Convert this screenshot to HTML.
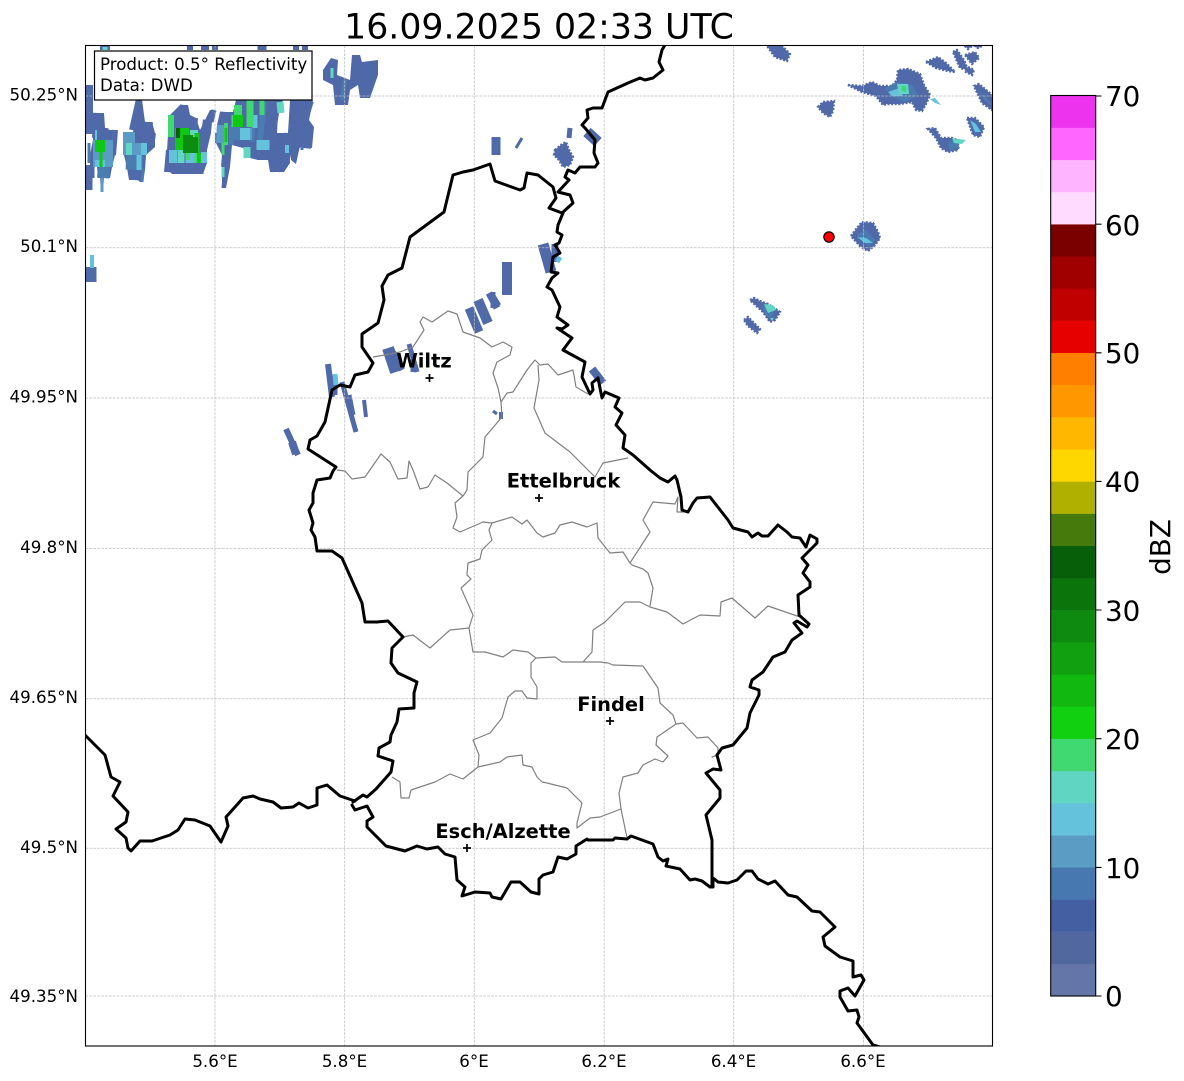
<!DOCTYPE html>
<html><head><meta charset="utf-8"><title>Reflectivity</title>
<style>html,body{margin:0;padding:0;background:#fff}svg{display:block}text{font-family:"DejaVu Sans","Liberation Sans",sans-serif;fill:#000}.tl{font-size:16.67px}.cb{font-size:27.78px}.city{font-size:19.44px;font-weight:bold;text-anchor:middle}.xl{text-anchor:middle}.yl{text-anchor:end}</style></head>
<body>
<svg width="1184" height="1081" viewBox="0 0 1184 1081" xmlns="http://www.w3.org/2000/svg">
<defs><clipPath id="ax"><rect x="85.5" y="45.5" width="907" height="1000.5"/></clipPath></defs>
<rect width="1184" height="1081" fill="#fff"/>
<text x="539" y="38.5" font-size="34.72" text-anchor="middle">16.09.2025 02:33 UTC</text>
<g clip-path="url(#ax)">
<g fill="#4f69a8">
<polygon points="93,113 104,113 105,128 110,130 117,130 115,155 112,167 110,178 104,178 103,192 101,192 100,178 98,178 97,167 90,165 90,155 93,140"/>
<polygon points="125,132 133,132 136,115 141,92 145,122 152,122 155,133 155,147 146,155 145,170 143,182 140,182 138,180 129,180 127,168 124,155 123,143"/>
<polygon points="180,105 188,105 190,115 196,118 200,130 205,120 210,110 215,110 212,122 211,133 207,150 207,163 203,174 172,174 170,172 165,172 167,150 168,135 170,115"/>
<polygon points="220,112 233,112 236,100 260,96 275,96 283,100 278,113 277,133 288,133 290,163 284,172 270,172 268,160 258,160 250,158 243,148 232,145 230,167 226,188 222,188 222,155 216,143 217,125"/>
<polygon points="290,100 313,100 309,120 314,127 312,148 300,146 296,164 291,160 288,133"/>
<polygon points="323,70 331,58 338,60 337,75 350,80 352,55 360,55 362,62 378,60 378,75 370,98 360,98 358,85 350,90 348,105 335,105 333,85 323,80"/>
</g>
<g fill="none" stroke-linecap="butt">
<g stroke="#5069a8">
<path d="M89 85V134" stroke-width="8"/><path d="M90 165L90 178" stroke-width="9"/><path d="M89 178V190" stroke-width="7"/>
<path d="M98 113L97 138" stroke-width="10"/><path d="M106 128L105 140" stroke-width="5"/><path d="M115 130L113 155" stroke-width="6"/>
<path d="M141 90L132 130" stroke-width="6"/><path d="M148 122L146 145" stroke-width="10"/><path d="M153 133L151 147" stroke-width="6"/><path d="M135 168L134 180" stroke-width="9"/>
<path d="M184 105L182 117" stroke-width="8"/><path d="M182 115L181 128" stroke-width="17"/><path d="M196 118L195 130" stroke-width="4"/><path d="M207 120L205 133" stroke-width="8"/><path d="M214 110L211 122" stroke-width="5"/><path d="M204 133L202 153" stroke-width="7"/><path d="M169 150L167 172" stroke-width="6"/><path d="M188 162L188 174" stroke-width="31"/>
<path d="M226 112L225 125" stroke-width="12"/><path d="M217 133V143" stroke-width="4"/><path d="M226 155L225 167" stroke-width="8"/><path d="M224 177L223 188" stroke-width="3"/>
<path d="M275 95L267 143" stroke-width="14"/><path d="M262 150V160" stroke-width="10"/><path d="M276 152V163" stroke-width="13"/><path d="M273 163L272 172" stroke-width="4"/><path d="M279 163L278 172" stroke-width="4"/>
<path d="M307 100L300 123" stroke-width="14"/><path d="M305 127L303 148" stroke-width="16"/><path d="M288 133L285 160" stroke-width="7"/><path d="M292 120L289 145" stroke-width="5"/><path d="M290 145L288 163" stroke-width="3"/>
<path d="M190 45V50" stroke-width="6"/><path d="M205 45V50" stroke-width="8"/><path d="M215 45V50" stroke-width="6"/><path d="M262 45V50" stroke-width="9"/><path d="M296 45V50" stroke-width="6"/><path d="M305 45V50" stroke-width="6"/><path d="M105 45V50" stroke-width="10"/>
<path d="M91 267V282" stroke-width="11"/>
<path d="M496 137V155" stroke-width="9"/><path d="M522 138L516 148" stroke-width="3"/><path d="M570 128L569 138" stroke-width="5"/>
<path d="M587 132L598 142" stroke-width="11"/>
<path d="M543 244L551 272" stroke-width="11"/><path d="M555 244V262" stroke-width="7"/>
<path d="M507 262V295" stroke-width="10"/><path d="M489 293L497 308" stroke-width="7"/><path d="M493 292V308" stroke-width="5"/>
<path d="M469 308L479 332" stroke-width="9"/><path d="M478 300L488 323" stroke-width="10"/><path d="M492 296L498 306" stroke-width="7"/>
<path d="M388 348L396 372" stroke-width="12"/><path d="M393 352L402 370" stroke-width="6"/><path d="M409 344L417 372" stroke-width="5"/><path d="M413 356V372" stroke-width="5"/>
<path d="M328 364L332 397" stroke-width="6"/><path d="M335 375V395" stroke-width="5"/><path d="M342 382L356 432" stroke-width="5"/><path d="M349 395L353 415" stroke-width="5"/>
<path d="M364 400L366 417" stroke-width="4"/><path d="M493 411L497 414" stroke-width="3"/><path d="M501 412V419" stroke-width="4"/>
<path d="M592 369L603 383" stroke-width="8"/><path d="M286 429L298 455" stroke-width="6"/><path d="M292 442L296 454" stroke-width="8"/>
</g>
<g stroke="#4a7cb2">
<path d="M89 143V163" stroke-width="3"/><path d="M104 167L103 178" stroke-width="12"/>
<path d="M264 102L260 140" stroke-width="6"/><path d="M253 125L252 142" stroke-width="5"/>
<path d="M135 155L134 170" stroke-width="17"/><path d="M143 168L142 182" stroke-width="3"/>
<path d="M232 125L231 145" stroke-width="5"/><path d="M238 127L236 140" stroke-width="8"/>
<path d="M302 148V150" stroke-width="3"/><path d="M345 80L342 100" stroke-width="4"/>
</g>
<g stroke="#5a9cc6">
<path d="M103 140L103 167" stroke-width="20"/><path d="M129 132V145" stroke-width="12"/><path d="M134 143V155" stroke-width="22"/>
<path d="M222 125L221 143" stroke-width="10"/><path d="M102 178L102 192" stroke-width="3"/>
<path d="M248 128V140" stroke-width="8"/>
</g>
<g stroke="#64c2dc">
<path d="M96 130V140" stroke-width="2"/><path d="M144 143V155" stroke-width="6"/><path d="M139 155V170" stroke-width="5"/><path d="M245 128V140" stroke-width="10"/><path d="M263 140L263 150" stroke-width="13"/>
<path d="M92 255V268" stroke-width="4"/><path d="M287 145V153" stroke-width="4"/><path d="M173 150V163" stroke-width="8"/><path d="M190 150V163" stroke-width="9"/><path d="M204 152V163" stroke-width="6"/>
<path d="M255 115V128" stroke-width="5"/><path d="M100 160V167" stroke-width="10"/><path d="M560 257L557 262" stroke-width="5"/>
<path d="M335 374L336 385" stroke-width="5"/>
</g>
<g stroke="#62d6c2">
<path d="M129 143V155" stroke-width="6"/><path d="M181 150V163" stroke-width="7"/><path d="M280 102L281 113" stroke-width="7"/><path d="M247 147V158" stroke-width="7"/><path d="M223 167V177" stroke-width="3"/><path d="M194 130V150" stroke-width="8"/><path d="M105 47V50" stroke-width="5"/><path d="M332 68V78" stroke-width="3"/>
</g>
<g stroke="#40d870">
<path d="M171 115L171 137" stroke-width="6"/><path d="M238 105V117" stroke-width="8"/><path d="M250 100V127" stroke-width="7"/><path d="M262 100V115" stroke-width="5"/><path d="M226 123V145" stroke-width="4"/><path d="M223 143V155" stroke-width="3"/><path d="M197 153V163" stroke-width="5"/><path d="M188 150V160" stroke-width="4"/>
<path d="M233 115V127" stroke-width="3"/>
</g>
<g stroke="#10c814">
<path d="M100 140V152" stroke-width="10"/><path d="M101 150V167" stroke-width="3"/><path d="M238 115V127" stroke-width="10"/><path d="M182 128V150" stroke-width="14"/><path d="M199 153V163" stroke-width="4"/><path d="M226 128V142" stroke-width="3"/><path d="M197 133V153" stroke-width="5"/>
</g>
<g stroke="#0c8c10"><path d="M188 135V153" stroke-width="10"/><path d="M195 137V153" stroke-width="6"/></g>
<g stroke="#086008"><path d="M178 128V138" stroke-width="4"/></g>
</g>
<g fill="#5069a8" stroke="#5069a8" stroke-width="2.4" stroke-dasharray="2 1.6">
<polygon points="767,46 782,46 790,54 787,61 775,57"/>
<polygon points="818,107 823,102 834,101 833,111 830,117 823,113"/>
<polygon points="848,85 862,86 872,82 880,86 892,86 897,80 898,70 908,69 920,74 924,85 930,95 926,104 922,111 916,110 912,102 900,104 887,104 883,105 876,96 862,92"/>
<polygon points="926,62 938,57 946,63 955,72 948,71 936,68"/>
<polygon points="953,52 957,50 964,60 968,70 960,68"/><polygon points="965,55 975,52 979,58 972,64"/><polygon points="968,67 974,70 972,75 966,72"/><polygon points="965,46 972,46 968,49"/><polygon points="975,46 982,46 978,48"/>
<polygon points="974,86 979,84 992,95 992,110 982,103"/>
<polygon points="928,129 935,128 941,138 952,138 958,140 958,150 948,152 941,148 936,138"/>
<polygon points="967,118 975,118 984,127 980,137 973,135"/>
<polygon points="851,236 857,228 862,222 873,223 878,232 880,238 875,245 868,251 860,246"/>
<polygon points="750,300 754,298 762,302 768,304 780,312 775,320 770,322 763,312"/>
<polygon points="744,320 748,317 760,329 757,333 748,326"/>
<polygon points="555,150 561,145 566,142 569,150 573,157 570,165 563,167 559,160 554,155"/>
</g>
<g fill="#4a7cb2"><polygon points="885,88 898,82 912,85 918,95 905,102 892,97"/><polygon points="980,92 988,99 992,106 984,100"/><polygon points="948,142 955,140 960,148 950,150"/><polygon points="857,234 866,230 875,240 868,246"/><polygon points="762,306 775,308 772,318 766,316"/></g>
<g fill="#64c2dc"><polygon points="970,120 976,124 981,132 975,132"/><polygon points="888,92 900,88 903,96 892,96"/><polygon points="857,237 866,238 873,243 865,243"/><polygon points="930,99 935,98 941,105 935,103"/></g>
<g fill="#62d6c2"><polygon points="952,138 958,139 966,140 962,144 954,143"/><polygon points="897,84 908,84 909,94 899,94"/><polygon points="764,304 773,305 776,310 768,313"/><polygon points="770,318 774,318 772,321"/></g>
<polygon points="901,86 906,86 906,92 902,91" fill="#40d870"/>
<rect x="248" y="87" width="14" height="13" fill="#e6e9f3"/>
</g>
<g stroke="#bdbdbd" stroke-width=".75" stroke-dasharray="2.7 1.2" fill="none">
<path d="M215 45.5V1046M344.7 45.5V1046M474.3 45.5V1046M604.2 45.5V1046M733.7 45.5V1046M863.5 45.5V1046"/>
<path d="M85.5 96H992.5M85.5 247.7H992.5M85.5 398H992.5M85.5 548.5H992.5M85.5 698.7H992.5M85.5 848.3H992.5M85.5 996H992.5"/>
</g>
<g clip-path="url(#ax)">
<g fill="none" stroke="#808080" stroke-width="1.2" stroke-linejoin="round">
<path d="M373 357L385 355 400 352 413 347 424 330 420 322 423 317 432 322 448 311 457 314 463 332 480 338 492 347 503 342 512 347 510 355 497 362 493 373 498 388 501 402 507 393 513 392 527 370 535 360 540 365 548 364 558 375 573 370 576 387 588 394"/>
<path d="M501 402L502 417 485 437 483 457 468 472 467 490 463 496 455 503 457 517 453 528 460 532 483 522 492 523 512 517 522 524 527 520 537 533 543 537 555 533 560 525 572 522 587 527 597 523 598 538 610 553 623 552 630 563"/>
<path d="M538 365L539 380 534 408 545 433 570 452 595 477 603 463 628 458"/>
<path d="M337 470L345 471 352 479 365 477 381 454 390 462 398 479 407 478 409 461 413 470 420 489 428 487 435 475 447 483 463 496"/>
<path d="M492 523L489 530 492 540 482 550 480 559 468 563 467 575 471 579 461 588 473 615 469 628 473 652 485 652 503 657 513 650 528 652 536 658 555 657 562 662 583 662 592 652 593 630 605 622 625 602 640 602 650 607"/>
<path d="M403 637L413 635 430 648 450 630 469 628"/>
<path d="M536 658L531 663 531 677 537 687 537 699 527 698 522 691 515 691 508 697 502 718 490 733 473 740 479 755 478 767"/>
<path d="M392 777L400 782 401 798 409 798 411 790 435 782 450 774 463 779 478 767 500 762 507 757 522 755 523 765 532 767 537 777 542 782 547 783 567 788 582 803 577 823 577 828 590 818 600 817 621 809 626 833 627 837"/>
<path d="M621 809L619 793 623 777 638 773 643 765 655 759 663 762 668 756 656 745 657 737 676 724 683 723 697 738 708 737 718 748 718 755 712 757 717 755"/>
<path d="M583 662L600 662 608 663 613 665 643 666 658 688 660 703 673 715 676 724"/>
<path d="M650 607L667 612 683 624 700 615 720 616 721 602 732 598 755 618 768 606 800 617"/>
<path d="M650 606L653 588 648 573 643 569 632 565 630 563"/>
<path d="M630 563L650 532 643 520 653 502 675 504 678 497 677 512 687 512"/>
</g>
<g fill="none" stroke="#000" stroke-width="3" stroke-linejoin="round" stroke-linecap="round">
<path d="M85 735L105 755 111 777 120 782 113 796 128 812 126 822 116 829 126 838 128 848 131 851 140 841 152 841 170 835 178 830 185 819 195 820 210 826 221 842 228 826 226 817 235 807 243 798 253 796 260 799 273 802 281 808 293 807 299 803 308 808 317 805 317 788 327 785 340 796 355 801"/>
<path d="M353 802L363 795 367 797 376 789 391 772 393 761 378 756 379 748 390 742 391 735 397 722 399 709 414 708 414 693 417 682 398 673 391 663 392 648 403 637 388 621 377 622 365 622 362 603 342 558 332 551 317 551 315 537 311 530 313 523 309 510 313 503 313 493 317 480 330 478 333 471 336 467 308 449 310 440 317 436 325 422 332 390 340 385 350 387 355 375 368 372 373 363 362 347 362 334 378 323 384 300 382 286 388 275 402 268 410 237 444 212 453 175 463 172 473 170 490 164 495 181 520 190 524 188 527 173 538 175 553 187 556 198 549 208 562 213 573 203 570 195 558 192 569 180 565 177 568 170 575 173 580 167 595 167 598 163 594 153 595 140 585 128 582 125 588 118 587 110 593 108 602 108 608 92 628 83 640 78 645 80 653 78 663 70 659 62 662 50 665 45"/>
<path d="M563 213L558 225 557 232 562 235 559 243 555 245 560 253 553 257 551 272 558 273 552 278 547 287 552 290 560 307 557 317 568 325 562 329 557 328 572 338 563 350 585 362 582 377 590 394 593 390 592 383 598 378 602 398 605 392 619 398 615 407 622 413 616 425 625 435 623 448 633 455 650 470 660 478 668 482 675 476 677 480 681 497 682 510 688 512 693 503 697 498 710 497 728 520 733 528 748 532 752 537 758 533 762 536 768 536 778 525 787 532 792 537 800 538 806 547 810 535 817 539 817 543 802 558 808 565 803 573 810 582 810 587 798 595 799 615 809 624 807 627 797 621 794 623 802 633 792 640 785 652 773 657 763 672 752 680 750 687 759 690 759 695 750 713 747 728 733 745 722 748 717 755 721 770 713 769 706 773 720 790 720 798 706 815 712 840 712 887"/>
<path d="M352 805L355 810 367 806 373 817 367 821 367 827 386 846 405 851 417 846 427 849 438 847 445 854 455 857 457 880 465 887 462 896 475 892 490 893 492 897 501 899 511 882 520 882 531 892 539 894 539 879 543 875 553 872 558 857 567 859 576 854 576 846 587 839 588 840 613 840 615 838 627 839 631 836 653 844 658 857 663 861 668 859 666 866 680 869 690 880 695 879 702 881 710 887 713 887 713 878 718 882 728 883 737 880 746 871 752 871 758 879 768 884 775 881 788 895 797 897 812 911 820 912 835 927 823 937 825 946 840 957 853 961 853 977 861 975 864 980 855 996 848 988 840 991 840 997 848 1011 857 1010 859 1017 857 1023 873 1045 880 1047"/>
</g>
</g>
<circle cx="829" cy="237" r="5.2" fill="#f00" stroke="#000" stroke-width="1.1"/>
<g stroke="#000" stroke-width="1.7" fill="none">
<path d="M425.5 378h8M429.5 374v8"/><path d="M535 498h8M539 494v8"/><path d="M606 721h8M610 717v8"/><path d="M463 848h8M467 844v8"/>
</g>
<text class="city" x="424" y="367.5">Wiltz</text>
<text class="city" x="563.5" y="487.7">Ettelbruck</text>
<text class="city" x="611" y="711">Findel</text>
<text class="city" x="503" y="838">Esch/Alzette</text>
<rect x="94.5" y="51" width="217.5" height="49" fill="#fff" stroke="#000" stroke-width="1.2"/>
<text class="tl" x="100" y="70">Product: 0.5° Reflectivity</text>
<text class="tl" x="100" y="91">Data: DWD</text>
<rect x="85.5" y="45.5" width="907" height="1000.5" fill="none" stroke="#000" stroke-width="1.1"/>
<g class="tl xl">
<text class="tl xl" x="215" y="1067">5.6°E</text><text class="tl xl" x="344.5" y="1067">5.8°E</text><text class="tl xl" x="474" y="1067">6°E</text><text class="tl xl" x="604" y="1067">6.2°E</text><text class="tl xl" x="733.5" y="1067">6.4°E</text><text class="tl xl" x="863" y="1067">6.6°E</text>
</g>
<text class="tl yl" x="78" y="100.5">50.25°N</text><text class="tl yl" x="78" y="252">50.1°N</text><text class="tl yl" x="78" y="402.5">49.95°N</text><text class="tl yl" x="78" y="553">49.8°N</text><text class="tl yl" x="78" y="703">49.65°N</text><text class="tl yl" x="78" y="853">49.5°N</text><text class="tl yl" x="78" y="1002">49.35°N</text>
<g>
<rect x="1051" y="963.84" width="44.5" height="32.4" fill="#6475a8"/><rect x="1051" y="931.68" width="44.5" height="32.4" fill="#51689f"/><rect x="1051" y="899.52" width="44.5" height="32.4" fill="#4460a2"/><rect x="1051" y="867.36" width="44.5" height="32.4" fill="#4878b0"/><rect x="1051" y="835.2" width="44.5" height="32.4" fill="#5a9cc4"/><rect x="1051" y="803.04" width="44.5" height="32.4" fill="#64c2dc"/><rect x="1051" y="770.88" width="44.5" height="32.4" fill="#60d6c2"/><rect x="1051" y="738.72" width="44.5" height="32.4" fill="#40d870"/><rect x="1051" y="706.56" width="44.5" height="32.4" fill="#10d010"/><rect x="1051" y="674.4" width="44.5" height="32.4" fill="#10b810"/><rect x="1051" y="642.24" width="44.5" height="32.4" fill="#10a010"/><rect x="1051" y="610.08" width="44.5" height="32.4" fill="#0e8a10"/><rect x="1051" y="577.92" width="44.5" height="32.4" fill="#0b740b"/><rect x="1051" y="545.76" width="44.5" height="32.4" fill="#085f0a"/><rect x="1051" y="513.6" width="44.5" height="32.4" fill="#467a0c"/><rect x="1051" y="481.44" width="44.5" height="32.4" fill="#b0b000"/><rect x="1051" y="449.28" width="44.5" height="32.4" fill="#ffd700"/><rect x="1051" y="417.12" width="44.5" height="32.4" fill="#ffb700"/><rect x="1051" y="384.96" width="44.5" height="32.4" fill="#ff9800"/><rect x="1051" y="352.8" width="44.5" height="32.4" fill="#ff7f00"/><rect x="1051" y="320.64" width="44.5" height="32.4" fill="#e60000"/><rect x="1051" y="288.48" width="44.5" height="32.4" fill="#c00000"/><rect x="1051" y="256.32" width="44.5" height="32.4" fill="#a00000"/><rect x="1051" y="224.16" width="44.5" height="32.4" fill="#7a0000"/><rect x="1051" y="192" width="44.5" height="32.4" fill="#ffdcff"/><rect x="1051" y="159.84" width="44.5" height="32.4" fill="#ffb4ff"/><rect x="1051" y="127.68" width="44.5" height="32.4" fill="#ff66ff"/><rect x="1051" y="95.52" width="44.5" height="32.4" fill="#ee33ee"/>
</g>
<rect x="1050.7" y="95.5" width="45" height="900.5" fill="none" stroke="#000" stroke-width="1.1"/>
<path d="M1095.5 96h6M1095.5 224.2h6M1095.5 352.8h6M1095.5 481.4h6M1095.5 610h6M1095.5 738.7h6M1095.5 867.4h6M1095.5 996h6" stroke="#000" stroke-width="1.1"/>
<text class="cb" x="1105" y="106">70</text><text class="cb" x="1105" y="235">60</text><text class="cb" x="1105" y="363">50</text><text class="cb" x="1105" y="491.5">40</text><text class="cb" x="1105" y="620.5">30</text><text class="cb" x="1105" y="749">20</text><text class="cb" x="1105" y="878">10</text><text class="cb" x="1105" y="1006">0</text>
<text class="cb" transform="translate(1170 547) rotate(-90)" text-anchor="middle">dBZ</text>
</svg>
</body></html>
